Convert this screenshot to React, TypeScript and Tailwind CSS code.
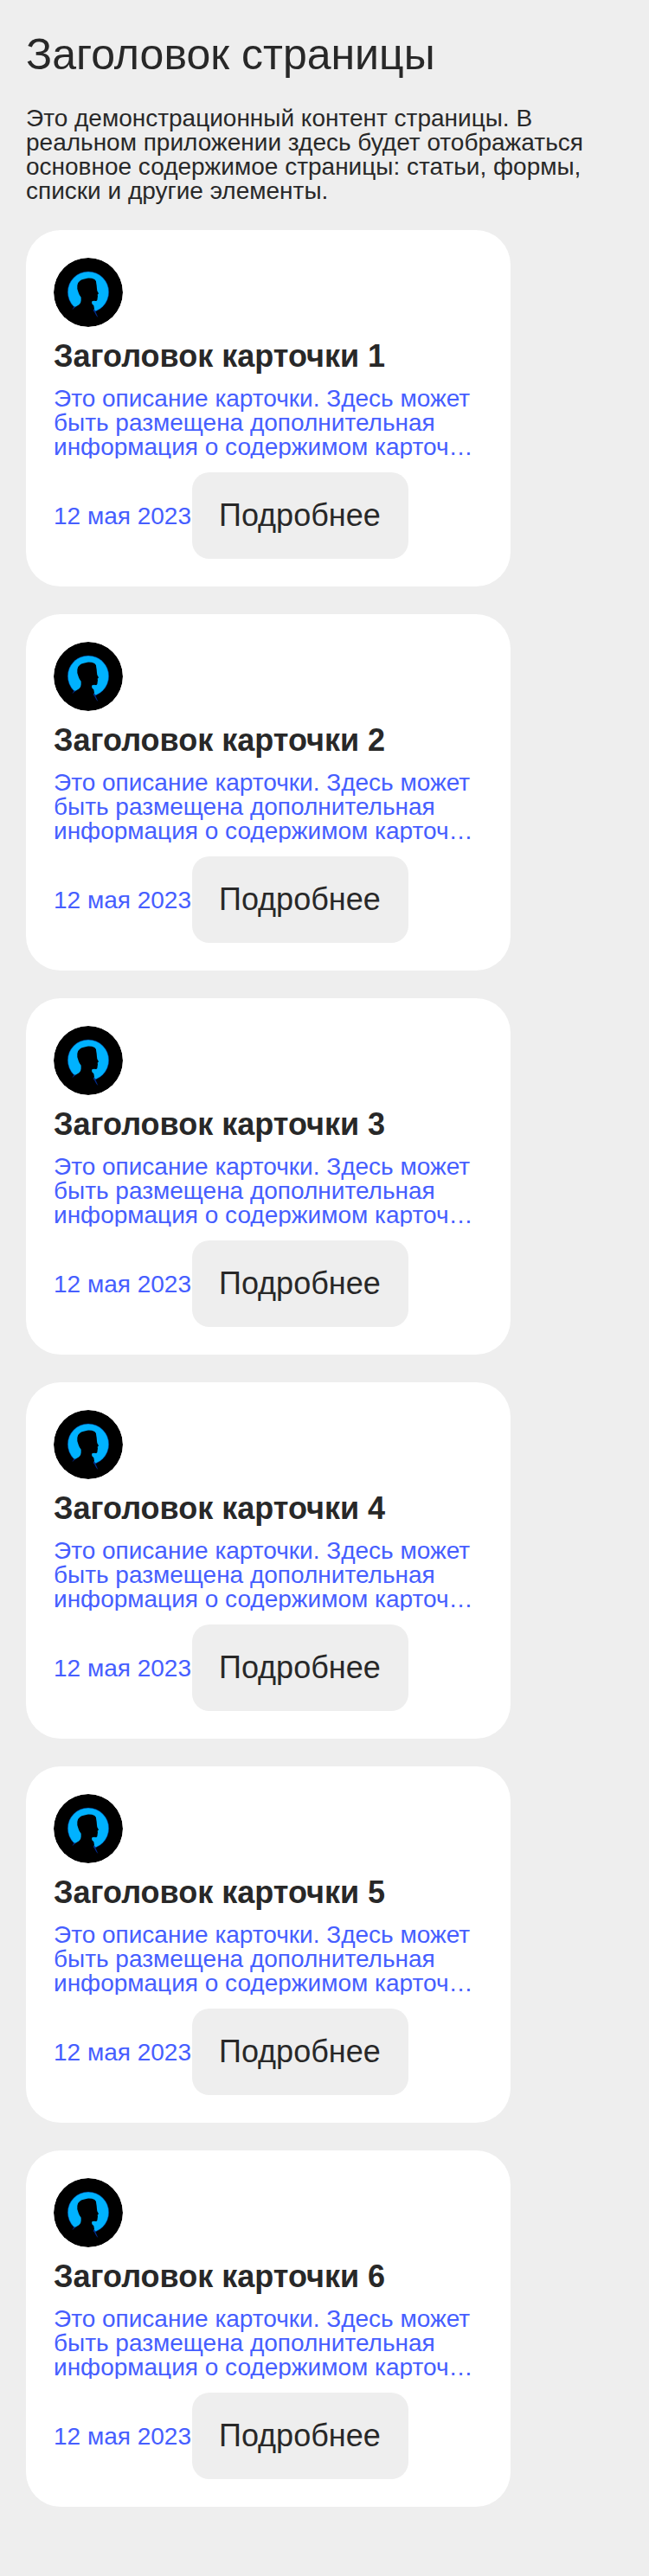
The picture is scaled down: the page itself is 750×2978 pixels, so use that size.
const cards = [1, 2, 3, 4, 5, 6];

function Avatar() {
  return (
    <svg className="block size-20 shrink-0 rounded-full" viewBox="0 0 240 240" aria-hidden="true">
      <circle cx="120" cy="120" r="120" fill="#000" />
      <circle cx="120" cy="119" r="71" fill="#00b2ff" stroke="#003a9c" strokeWidth="1.5" />
      <path
        d="M60 215 L62 184 L73 172 L88 163 Q95 158 95 148 L95 137 Q89 131 86 121 Q80 108 82 96 Q83 85 90 81 Q95 75 104 74 L116 71 Q132 70 142 75 Q149 80 148 90 L149 96 L150 107 L151 115 L156 124 L152 128 L153 133 L151 147 Q149 151 142 149 L134 150 Q131 153 133 160 L139 166 L141 177 L138 182 L150 200 L190 190 L170 215 Q120 235 60 215 Z"
        fill="#000"
      />
      <path d="M64 181 L71 168 L76 170 Z M137 181 L142 179 L154 207 L148 201 Z" fill="#002a8c" />
    </svg>
  );
}

function Card({ index }: { index: number }) {
  return (
    <article className="flex h-[412px] w-[560px] flex-col gap-4 rounded-[40px] bg-white p-8">
      <Avatar />
      <h2 className="text-[36px] leading-none font-bold">Заголовок карточки {index}</h2>
      <p className="h-[84px] overflow-hidden pt-px text-[28px] leading-none text-[#465eff]">
        Это описание карточки. Здесь может быть размещена дополнительная информация о содержимом карточ…
      </p>
      <div className="flex items-center">
        <span className="w-[160px] shrink-0 pt-0.5 text-[28px] leading-none whitespace-nowrap text-[#465eff]">
          12 мая 2023
        </span>
        <button className="h-[100px] w-[250px] rounded-[20px] bg-[#eee] pl-[31px] text-left text-[36px] leading-none">
          Подробнее
        </button>
      </div>
    </article>
  );
}

export default function App() {
  return (
    <main className="min-h-[2978px] bg-[#eee] px-[30px] pt-[38px] pb-20 font-['Liberation_Sans',Arial,sans-serif] text-[#282828]">
      <h1 className="mb-[35px] text-[50px] leading-none">Заголовок страницы</h1>
      <p className="mb-[31px] text-[28px] leading-none">
        Это демонстрационный контент страницы. В реальном приложении здесь будет отображаться основное содержимое
        страницы: статьи, формы, списки и другие элементы.
      </p>
      <div className="flex flex-col gap-8">
        {cards.map((n) => (
          <Card key={n} index={n} />
        ))}
      </div>
    </main>
  );
}
